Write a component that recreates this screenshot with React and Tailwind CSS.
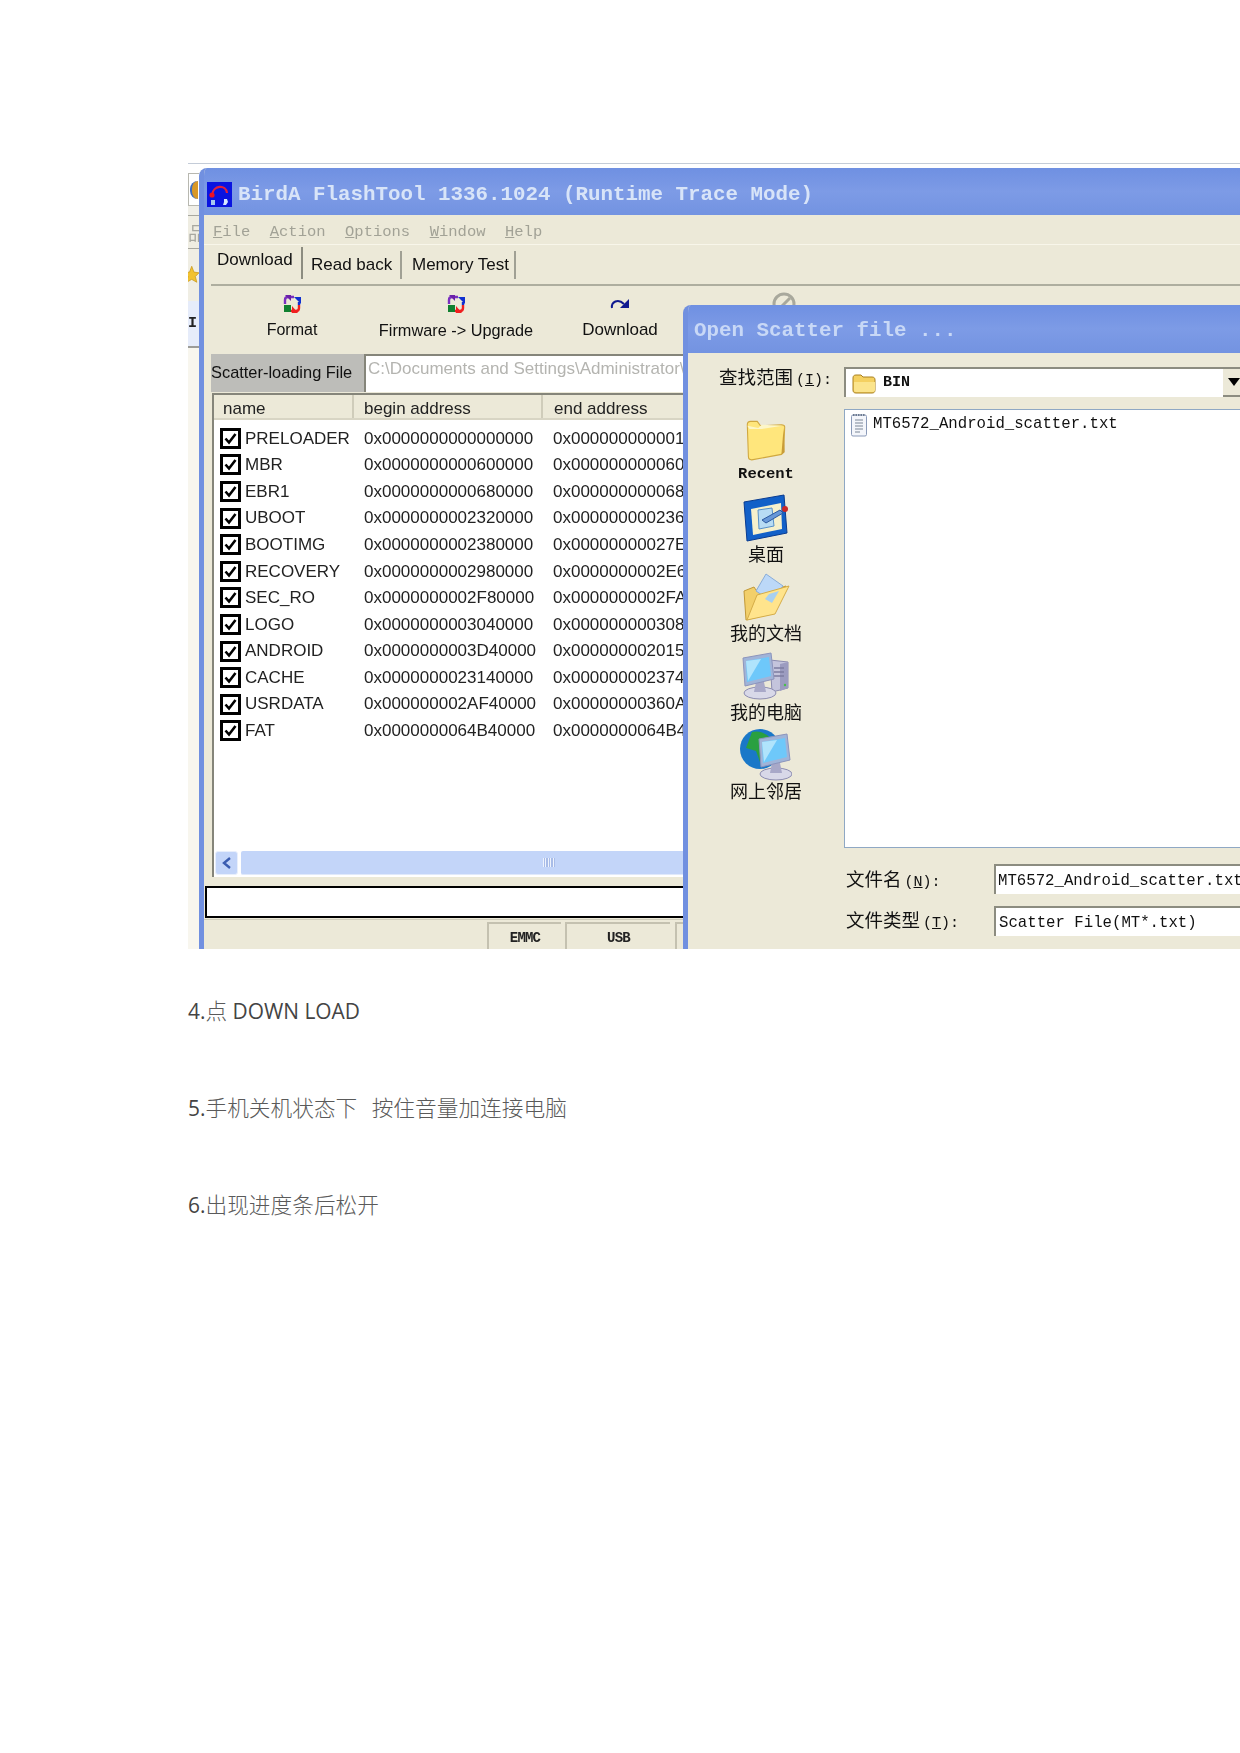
import React from 'react'

const rows = [
  ['PRELOADER', '0x0000000000000000', '0x000000000001'],
  ['MBR', '0x0000000000600000', '0x000000000060'],
  ['EBR1', '0x0000000000680000', '0x000000000068'],
  ['UBOOT', '0x0000000002320000', '0x000000000236'],
  ['BOOTIMG', '0x0000000002380000', '0x00000000027E'],
  ['RECOVERY', '0x0000000002980000', '0x0000000002E6'],
  ['SEC_RO', '0x0000000002F80000', '0x0000000002FA'],
  ['LOGO', '0x0000000003040000', '0x000000000308'],
  ['ANDROID', '0x0000000003D40000', '0x000000002015'],
  ['CACHE', '0x0000000023140000', '0x000000002374'],
  ['USRDATA', '0x000000002AF40000', '0x00000000360A'],
  ['FAT', '0x0000000064B40000', '0x0000000064B4'],
]

const menus = ['File', 'Action', 'Options', 'Window', 'Help']

const sans = "font-['Liberation_Sans',sans-serif]"
const mono = "font-['Liberation_Mono',monospace]"
const cjk = "font-['Noto_Sans_CJK_SC',sans-serif]"

const AppIcon = () => (
  <svg width="25" height="25" viewBox="0 0 25 25" className="shrink-0">
    <rect width="25" height="25" fill="#0a14e0" />
    <path d="M5 13 C6 3 19 2 20 11" fill="none" stroke="#e02040" strokeWidth="2.2" />
    <circle cx="5" cy="13" r="2.6" fill="#f01020" />
    <path d="M4 18h4v5H4z" fill="#a8c8f0" />
    <path d="M17 17h3l1 3-2 3h-3l1-3z" fill="#d8e8ff" />
  </svg>
)

const SyncIcon = () => (
  <svg width="20" height="20" viewBox="0 0 20 20">
    <path d="M3 10V6q0-3 3-3h6" fill="none" stroke="#7a2fc0" strokeWidth="2.4" />
    <path d="M3 1h6v6z" fill="#6a20a8" />
    <path d="M17 8v3" fill="none" stroke="#1030d0" strokeWidth="2.4" />
    <path d="M12 3h7v7z" fill="#1030d0" />
    <path d="M17 11v3q0 3-3 3H9" fill="none" stroke="#f02020" strokeWidth="2.4" />
    <path d="M10 19v-7l6 7z" fill="#f02020" />
    <path d="M2 11h7v7H2z" fill="#108030" />
  </svg>
)

const RedoIcon = () => (
  <svg width="20" height="20" viewBox="0 0 20 20">
    <path d="M2 14 C1 8 8 4 14 10" fill="none" stroke="#101a90" strokeWidth="2" />
    <path d="M19 5v9h-9z" fill="#101a90" />
  </svg>
)

const StopIcon = () => (
  <svg width="26" height="26" viewBox="0 0 26 26">
    <circle cx="13" cy="13" r="10" fill="#ece9d8" stroke="#a8a89c" strokeWidth="3" />
    <path d="M7 19L19 7" stroke="#a8a89c" strokeWidth="3" />
  </svg>
)

const StarIcon = () => (
  <svg width="26" height="30" viewBox="0 0 22 26">
    <path d="M12 1l3 8 7 1-5 5 2 8-7-4-7 4 2-8-5-5 7-1z" fill="#f2c230" stroke="#c89818" />
  </svg>
)

const MiniFolder = () => (
  <svg width="25" height="21" viewBox="0 0 25 21" className="shrink-0">
    <path d="M1 5c0-2 1-3 3-3h5l2 2h9c2 0 3 1 3 3v10c0 2-1 3-3 3H4c-2 0-3-1-3-3z" fill="#f4d060" stroke="#a88020" />
    <path d="M2 9h21v8c0 1-1 2-2 2H4c-1 0-2-1-2-2z" fill="#fbe48c" />
  </svg>
)

const FileIcon = () => (
  <svg width="18" height="24" viewBox="0 0 18 24" className="shrink-0">
    <rect x="1.5" y="2" width="15" height="21" rx="1.5" fill="#f4f6fb" stroke="#8a9ab8" />
    <path d="M3 2h12" stroke="#6c7a90" strokeWidth="2" strokeDasharray="1.5 1" />
    <path d="M5 7h8M5 10h8M5 13h8M5 16h8M5 19h5" stroke="#7a8696" />
  </svg>
)

const RecentIcon = () => (
  <svg width="44" height="44" viewBox="0 0 40 40">
    <path d="M3 7c0-2 1-3 3-3h6l3 4 19-1c2 0 3 1 3 2l-1 22c0 2-1 2-2 3L7 39c-2 0-3-1-3-3z" fill="#ffe67c" stroke="#d0a840" />
    <path d="M3 8l10 2 3-3 19 1-19 3-11 0z" fill="#fdf6c8" />
    <path d="M36 10l1 22-3 2z" fill="#c89c38" />
  </svg>
)

const DesktopIcon = () => (
  <svg width="48" height="48" viewBox="0 0 48 48">
    <path d="M2 8l40-7 3 38-40 8z" fill="#1260c8" stroke="#0a3c90" />
    <path d="M9 15l30-6 1 26-29 6z" fill="#f6f0cc" />
    <path d="M16 16l14-2 2 18-15 3z" fill="#b8dcf4" stroke="#5890c8" />
    <path d="M20 26l18-10 3 3-17 10z" fill="#6898d8" stroke="#2c5aa0" />
    <circle cx="43" cy="15" r="3" fill="#c82828" />
  </svg>
)

const DocsIcon = () => (
  <svg width="48" height="48" viewBox="0 0 48 48">
    <path d="M4 47L2 18l10-4 2 3 10 2 20-6-12 27z" fill="#f2cf6a" stroke="#c09838" />
    <path d="M24 1l17 12-12 15-15-10z" fill="#bcd8f8" stroke="#88acd8" />
    <path d="M5 47l10-25 32-9-14 28z" fill="#ffe48c" stroke="#d4ac48" />
    <path d="M27 21l10-3-7 12-7-4z" fill="#a8d0f0" />
  </svg>
)

const Monitor = () => (
  <g>
    <ellipse cx="20" cy="41" rx="16" ry="6" fill="#d8d8e8" stroke="#8c8cb0" />
    <path d="M16 30h8l2 10h-12z" fill="#a8a8c8" />
    <path d="M3 6l28-5 3 26-29 7z" fill="#a0b4d8" stroke="#8c94bc" />
    <path d="M6 9l23-4 2 19-24 6z" fill="#6ec8fa" />
    <path d="M6 9l15-2-13 22z" fill="#b0e4fc" />
  </g>
)

const ComputerIcon = () => (
  <svg width="52" height="48" viewBox="0 0 52 48">
    <path d="M30 8l18 2v26l-16 4z" fill="#c4c4dc" stroke="#8c8cb0" />
    <path d="M40 12l8-2v26l-8 3z" fill="#9c9cc0" />
    <path d="M34 16h10M34 20h10M34 24h10" stroke="#7c7ca0" strokeWidth="1.4" />
    <circle cx="45" cy="33" r="1.2" fill="#48c048" />
    <Monitor />
  </svg>
)

const NetworkIcon = () => (
  <svg width="52" height="52" viewBox="0 0 52 52">
    <circle cx="20" cy="20" r="20" fill="#1a78c8" />
    <path d="M12 3c8-2 16 2 20 8l-6 4 1 10-7 8-4-11-10-3z" fill="#2aa040" />
    <g transform="translate(16 4)">
      <Monitor />
    </g>
  </svg>
)

const Checkbox = () => (
  <span className="w-[21px] h-[21px] border-[3px] border-black bg-white flex items-center justify-center shrink-0">
    <svg width="13" height="13" viewBox="0 0 13 13">
      <path d="M1.5 6.5l3.5 4 6.5-8.5" fill="none" stroke="#000" strokeWidth="2.6" />
    </svg>
  </span>
)

const SideItem = ({ icon, label, className }) => (
  <div className="h-[79px] flex flex-col items-center">
    <div className="h-[48px] flex items-center justify-center">{icon}</div>
    <div className={`leading-[22px] text-[#111] whitespace-nowrap ${className}`}>{label}</div>
  </div>
)

const LeftStrip = () => (
  <div className="w-[11px] shrink-0 bg-[#f6f4ec] flex flex-col overflow-hidden">
    <div className="h-[9px] bg-white shrink-0" />
    <div className="h-[33px] shrink-0 bg-white border-y border-l border-[#b8b8b0] flex items-center">
      <span className="w-[8px] h-[18px] ml-[1px] rounded-l-full bg-[#d89828] border-l-2 border-[#3c6cc0]" />
    </div>
    <div className="h-[9px] bg-[#f0efe8] shrink-0" />
    <div className="h-[34px] shrink-0 border-y border-[#a8a8a0] bg-[#efede2] flex items-center overflow-hidden">
      <span className={`text-[18px] text-[#a8a8a0] ${cjk}`}>品</span>
    </div>
    <div className="h-[52px] shrink-0 bg-[#f0eee4] flex items-center -ml-[5px]">
      <StarIcon />
    </div>
    <div className="h-[47px] shrink-0 bg-[#e6ecfa] flex items-center border-b-2 border-[#9c9c98]">
      <span className={`text-[15px] font-bold text-[#222] leading-none ${mono}`}>I'</span>
    </div>
    <div className="flex-1 bg-[#f8f6ee]" />
  </div>
)

const tools = [
  ['Format', <SyncIcon />, 'text-[16px]'],
  ['Firmware -> Upgrade', <SyncIcon />, 'text-[16.3px]'],
  ['Download', <RedoIcon />, 'text-[17px]'],
  ['', <StopIcon />, 'text-[17px]'],
]

const MainWindow = () => (
  <div className="flex-1 min-w-0 mt-[4px] flex flex-col rounded-tl-[8px] overflow-hidden border-l-[5px] border-[#7190e0] bg-[#ece9d8]">
    <div className="h-[47px] shrink-0 -ml-[5px] pl-[8px] pt-[6px] flex items-center gap-[6px] bg-gradient-to-b from-[#6f90e2] via-[#7d9be6] to-[#7393e1]">
      <AppIcon />
      <span className={`text-[20.83px] font-bold text-[#d8e4f8] whitespace-nowrap ${mono}`}>
        BirdA FlashTool 1336.1024 (Runtime Trace Mode)
      </span>
    </div>

    <div className={`h-[30px] shrink-0 pl-[9px] pt-[6px] flex items-center gap-[19.5px] text-[15.5px] text-[#a2a296] border-b border-[#f8f6ea] ${mono}`}>
      {menus.map((m) => (
        <span key={m}><u>{m[0]}</u>{m.slice(1)}</span>
      ))}
    </div>

    <div className={`h-[42px] shrink-0 flex flex-col text-[17px] text-[#111] ${sans}`}>
      <div className="flex h-[34px] items-start">
        <div className="w-[99px] h-[32px] mt-[2px] pl-[13px] leading-[26px] border-r-2 border-[#8c8c80]">Download</div>
        <div className="w-[99px] h-[28px] mt-[6px] pl-[8px] leading-[27px] border-r-2 border-[#a0a094]">Read back</div>
        <div className="w-[114px] h-[28px] mt-[6px] pl-[10px] leading-[27px] border-r-2 border-[#a0a094]">Memory Test</div>
      </div>
      <div className="ml-[7px] mt-[5px] h-[2px] bg-[#aeae9f]" />
    </div>

    <div className={`h-[67px] shrink-0 pl-[6px] pt-[5px] flex text-[#111] ${sans}`}>
      {tools.map(([label, icon, size], i) => (
        <div key={i} className={`w-[164px] flex flex-col items-center ${size}`}>
          <div className="h-[24px] flex items-center">{icon}</div>
          <div className="mt-[2px] leading-[24px] whitespace-nowrap">{label}</div>
        </div>
      ))}
    </div>

    <div className={`h-[38px] shrink-0 ml-[7px] flex text-[17px] ${sans}`}>
      <div className="w-[153px] bg-[#bdbdb9] text-[16.4px] text-[#111] leading-[37px] whitespace-nowrap">Scatter-loading File</div>
      <div className="flex-1 bg-white border-t-2 border-l-2 border-[#85857a] pl-[2px] leading-[25px] text-[#b4b4b0] whitespace-nowrap overflow-hidden">
        {'C:\\Documents and Settings\\Administrator\\'}
      </div>
    </div>

    <div className={`h-[484px] shrink-0 ml-[8px] mt-[1px] flex flex-col bg-white border-t-2 border-l-2 border-[#85857a] text-[17px] text-[#222] ${sans}`}>
      <div className="h-[25px] shrink-0 flex bg-[#ece9d8] border-b-2 border-[#d8d5c4] leading-[28px]">
        <div className="w-[140px] pl-[9px] border-r-2 border-[#cfccba]">name</div>
        <div className="w-[189px] pl-[10px] border-r-2 border-[#cfccba]">begin address</div>
        <div className="pl-[11px]">end address</div>
      </div>
      <div className="flex-1 pt-[5px] pl-[6px]">
        {rows.map(([name, begin, end]) => (
          <div key={name} className="h-[26.6px] flex items-center whitespace-nowrap">
            <div className="w-[144px] flex items-center gap-[4px]">
              <Checkbox />
              <span>{name}</span>
            </div>
            <div className="w-[189px]">{begin}</div>
            <div>{end}</div>
          </div>
        ))}
      </div>
      <div className="h-[24px] shrink-0 mb-[2px] ml-[1px] flex gap-[3px]">
        <div className="w-[23px] rounded-[3px] bg-[#c3d5f9] border border-[#e8effc] flex items-center justify-center">
          <svg width="12" height="14" viewBox="0 0 12 14">
            <path d="M9 2L3 7l6 5" fill="none" stroke="#3a5cb0" strokeWidth="2.4" />
          </svg>
        </div>
        <div className="flex-1 rounded-[2px] bg-[#c3d5f9] border-b border-[#e0e9fb] pl-[302px] flex items-center">
          <div className="w-[12px] h-[9px] bg-[repeating-linear-gradient(90deg,#eef3fd_0,#eef3fd_1px,#a8bce8_1px,#a8bce8_2.5px)]" />
        </div>
      </div>
    </div>

    <div className="h-[32px] shrink-0 ml-[1px] mt-[9px] bg-white border-2 border-r-0 border-black" />

    <div className={`flex-1 mt-[1px] flex border-t border-[#cfccba] text-[14px] font-bold tracking-[-0.8px] text-[#222] ${mono}`}>
      <div className="w-[283px] shrink-0" />
      <div className="w-[74px] shrink-0 mt-[2px] border-l-2 border-t-2 border-[#c4c1b0] text-center leading-[28px]">EMMC</div>
      <div className="w-[105px] shrink-0 ml-[4px] mt-[2px] border-l-2 border-t-2 border-[#c4c1b0] text-center leading-[28px]">USB</div>
      <div className="flex-1 ml-[5px] mt-[2px] border-l-2 border-t-2 border-[#c4c1b0]" />
    </div>
  </div>
)

const LabelText = ({ zh, k, trail = ':' }) => (
  <span className="whitespace-nowrap text-[18.5px] text-[#111]">
    <span className={cjk}>{zh}</span>
    <span className={`ml-[3px] text-[15px] ${mono}`}>(<u>{k}</u>){trail}</span>
  </span>
)

// the open file dialog sits over the main window
const ScatterDialog = () => (
  <div className="absolute left-[495px] top-[141px] right-0 bottom-0 flex flex-col rounded-tl-[8px] overflow-hidden border-l-[5px] border-[#7190e0] bg-[#ece9d8]">
    <div className="h-[48px] shrink-0 -ml-[5px] pl-[11px] pt-[4px] flex items-center bg-gradient-to-b from-[#6f90e2] via-[#7d9be6] to-[#7393e1]">
      <span className={`text-[20.83px] font-bold text-[#c8d8f6] whitespace-nowrap ${mono}`}>Open Scatter file ...</span>
    </div>

    <div className="flex h-[30px] mt-[14px] shrink-0">
      <div className="w-[156px] shrink-0 pl-[31px] h-[24px] -mt-[4px]">
        <LabelText zh="查找范围" k="I" />
      </div>
      <div className="flex-1 bg-white border-t-2 border-l-2 border-[#8c8c80] flex items-center gap-[6px] pl-[6px]">
        <MiniFolder />
        <span className={`text-[15px] font-bold text-[#111] flex-1 ${mono}`}>BIN</span>
        <div className="w-[17px] h-full bg-[#ece9d8] border-b-2 border-[#8c8c80] flex items-center justify-end">
          <svg width="12" height="8" viewBox="0 0 12 8"><path d="M0 0h12L6 8z" fill="#000" /></svg>
        </div>
      </div>
    </div>

    <div className="flex h-[439px] mt-[12px] shrink-0">
      <div className="w-[156px] shrink-0 pt-[6px]">
        <SideItem icon={<RecentIcon />} label="Recent" className={`text-[15.5px] font-bold ${mono}`} />
        <SideItem icon={<DesktopIcon />} label="桌面" className={`text-[18px] ${cjk}`} />
        <SideItem icon={<DocsIcon />} label="我的文档" className={`text-[18px] ${cjk}`} />
        <SideItem icon={<ComputerIcon />} label="我的电脑" className={`text-[18px] ${cjk}`} />
        <SideItem icon={<NetworkIcon />} label="网上邻居" className={`text-[18px] ${cjk}`} />
      </div>
      <div className="flex-1 bg-white border border-r-0 border-[#8fa8c4] pt-[3px] pl-[5px]">
        <div className={`flex items-center gap-[5px] text-[15.7px] text-[#111] whitespace-nowrap ${mono}`}>
          <FileIcon />
          MT6572_Android_scatter.txt
        </div>
      </div>
    </div>

    <div className="flex h-[30px] mt-[16px] shrink-0">
      <div className="w-[306px] shrink-0 pl-[158px] h-[30px] mt-[1px]">
        <LabelText zh="文件名" k="N" />
      </div>
      <div className={`flex-1 bg-white border-t-2 border-l-2 border-[#8c8c80] pl-[2px] text-[15.7px] leading-[30px] text-[#111] whitespace-nowrap overflow-hidden ${mono}`}>
        MT6572_Android_scatter.txt
      </div>
    </div>
    <div className="flex h-[30px] mt-[12px] shrink-0">
      <div className="w-[306px] shrink-0 pl-[158px] h-[30px]">
        <LabelText zh="文件类型" k="T" />
      </div>
      <div className={`flex-1 bg-white border-t-2 border-l-2 border-[#8c8c80] pl-[3px] text-[15.7px] leading-[30px] text-[#111] whitespace-nowrap overflow-hidden ${mono}`}>
        Scatter File(MT*.txt)
      </div>
    </div>
  </div>
)

const Step = ({ num, children }) => (
  <p className="h-[32px] leading-[32px] whitespace-nowrap text-[#444] text-[20.9px] font-['Open_Sans',sans-serif]">
    {num}.{children}
  </p>
)

const Zh = ({ children }) => (
  <span className={`text-[21.7px] font-light text-[#5a5a5a] ${cjk}`}>{children}</span>
)

export default function App() {
  return (
    <div className="min-h-[1753px] bg-white pt-[163px] pl-[188px]">
      <div className="relative h-[786px] flex overflow-hidden border-t border-[#c4ccd8] blur-[0.5px]">
        <LeftStrip />
        <MainWindow />
        <ScatterDialog />
      </div>

      <div className="mt-[45px] flex flex-col gap-[65px]">
        <Step num="4"><Zh>点</Zh> DOWN LOAD</Step>
        <Step num="5"><Zh>手机关机状态下&nbsp;&nbsp;&nbsp;按住音量加连接电脑</Zh></Step>
        <Step num="6"><Zh>出现进度条后松开</Zh></Step>
      </div>
    </div>
  )
}
